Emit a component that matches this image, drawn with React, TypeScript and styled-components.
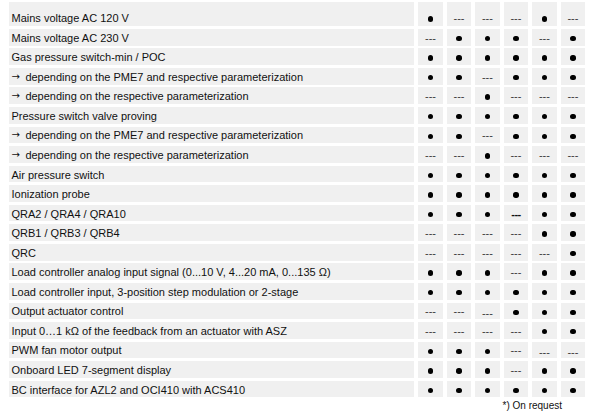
import React from "react";
import styled, { createGlobalStyle } from "styled-components";

const GlobalStyle = createGlobalStyle`
  html, body {
    margin: 0;
    padding: 0;
    background: #ffffff;
  }
  body {
    font-family: "Liberation Sans", Arial, sans-serif;
    color: #111111;
  }
`;

type Mark = "x" | "-" | "_" | "b";

interface RowData {
  label: string;
  marks: string;
  arrow?: boolean;
}

const rows: RowData[] = [
  { label: "Mains voltage AC 120 V", marks: "x---x-" },
  { label: "Mains voltage AC 230 V", marks: "-xxx-x" },
  { label: "Gas pressure switch-min / POC", marks: "xxxxxx" },
  { label: "depending on the PME7 and respective parameterization", marks: "xx-xxx", arrow: true },
  { label: "depending on the respective parameterization", marks: "--x---", arrow: true },
  { label: "Pressure switch valve proving", marks: "xxxxxx" },
  { label: "depending on the PME7 and respective parameterization", marks: "xx-xxx", arrow: true },
  { label: "depending on the respective parameterization", marks: "--x---", arrow: true },
  { label: "Air pressure switch", marks: "xxxxxx" },
  { label: "Ionization probe", marks: "xxxxxx" },
  { label: "QRA2 / QRA4 / QRA10", marks: "xxxbxx" },
  { label: "QRB1 / QRB3 / QRB4", marks: "----xx" },
  { label: "QRC", marks: "-----x" },
  { label: "Load controller analog input signal (0...10 V, 4...20 mA, 0...135 \u03A9)", marks: "xxx-xx" },
  { label: "Load controller input, 3-position step modulation or 2-stage", marks: "xxxxxx" },
  { label: "Output actuator control", marks: "--_xxx" },
  { label: "Input 0\u20261 k\u03A9 of the feedback from an actuator with ASZ", marks: "----xx" },
  { label: "PWM fan motor output", marks: "xxx-__" },
  { label: "Onboard LED 7-segment display", marks: "xxx-xx" },
  { label: "BC interface for AZL2 and OCI410 with ACS410", marks: "xxxxxx" },
];

const Page = styled.div`
  padding: 1.8px 0 0 9.3px;
  width: 576px;
`;

const Table = styled.div`
  display: flex;
  flex-direction: column;
  gap: 2.86px;
`;

const Row = styled.div<{ $first?: boolean }>`
  display: grid;
  grid-template-columns: 405px repeat(6, 24.6px);
  column-gap: 3.9px;
  height: ${(p) => (p.$first ? "24.2px" : "16.7px")};
`;

const LabelCell = styled.div`
  background: #f0f0f0;
  display: flex;
  align-items: flex-end;
  padding: 0 0 1.8px 2.2px;
  font-size: 11px;
  line-height: 12px;
  white-space: pre;
  overflow: hidden;
  color: #111111;
`;

const Arrow = styled.span`
  font-family: "DejaVu Sans", sans-serif;
  font-size: 10px;
  line-height: 12px;
  margin-right: 5.5px;
  color: #111111;
`;

const MarkCell = styled.div`
  background: #f0f0f0;
  display: flex;
  align-items: flex-end;
  justify-content: center;
  padding-bottom: 1.8px;
  font-size: 11px;
  line-height: 12px;
`;

const Dot = styled.span`
  display: block;
  width: 5.4px;
  height: 5.4px;
  border-radius: 50%;
  background: #000000;
  margin-bottom: 2.5px;
`;

const Dash = styled.span<{ $low?: boolean; $bold?: boolean }>`
  display: block;
  color: ${(p) => (p.$bold ? "#111111" : "#3a3a3a")};
  font-weight: ${(p) => (p.$bold ? 700 : 400)};
  letter-spacing: ${(p) => (p.$bold ? "-0.6px" : "0")};
  transform: translateY(${(p) => (p.$low ? "1.5px" : "0")});
`;

const Footnote = styled.div`
  margin-top: 2.3px;
  text-align: right;
  padding-right: 23.3px;
  font-size: 10px;
  line-height: 11px;
  color: #111111;
`;

const MarkView: React.FC<{ mark: Mark }> = ({ mark }) => {
  if (mark === "x") return <Dot />;
  if (mark === "_") return <Dash $low>---</Dash>;
  if (mark === "b") return <Dash $bold>---</Dash>;
  return <Dash>---</Dash>;
};

export default function App() {
  return (
    <>
      <GlobalStyle />
      <Page>
        <Table>
          {rows.map((r, i) => (
            <Row key={i} $first={i === 0}>
              <LabelCell>
                {r.arrow && <Arrow>{"\u2192"}</Arrow>}
                {r.label}
              </LabelCell>
              {r.marks.split("").map((m, j) => (
                <MarkCell key={j}>
                  <MarkView mark={m as Mark} />
                </MarkCell>
              ))}
            </Row>
          ))}
        </Table>
        <Footnote>*) On request</Footnote>
      </Page>
    </>
  );
}
